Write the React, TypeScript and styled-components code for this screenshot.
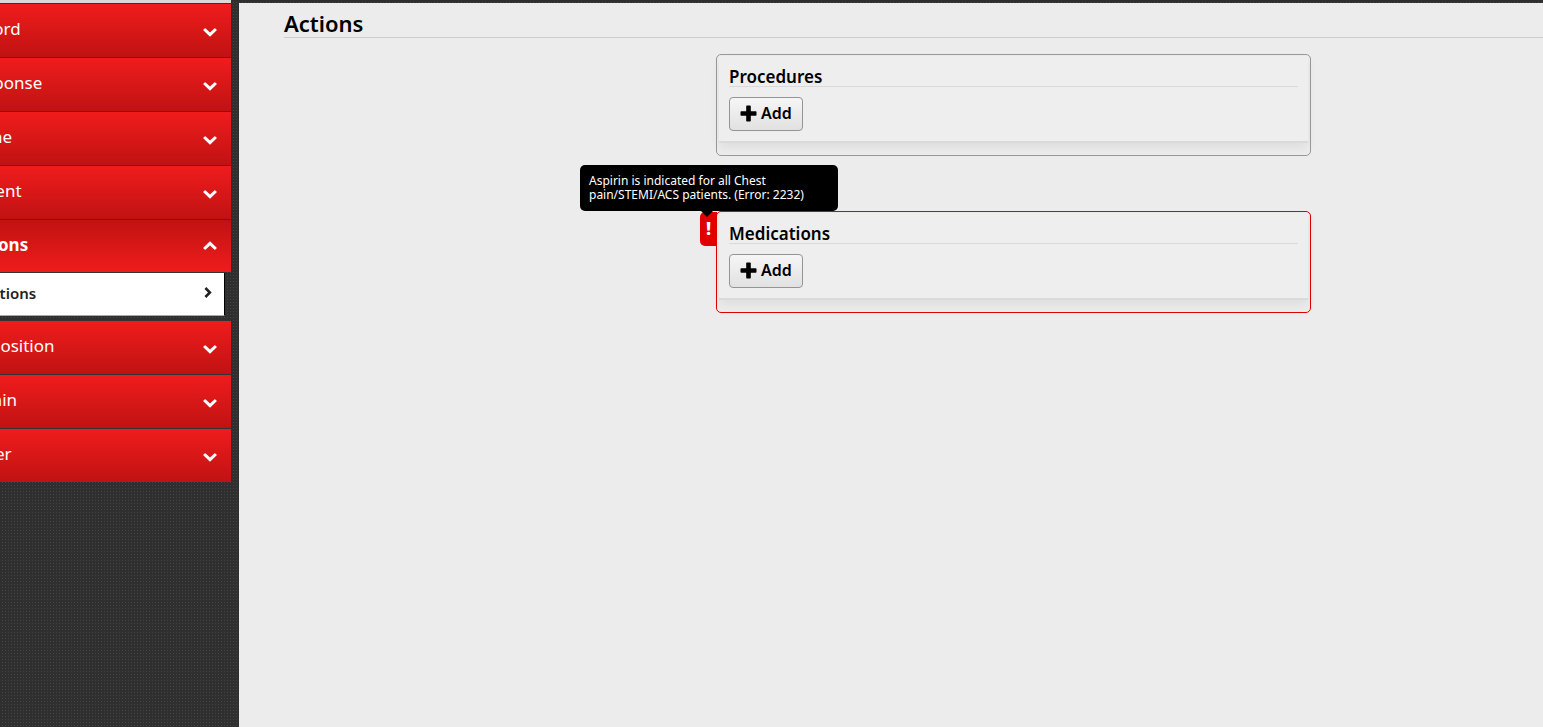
import React from "react";
import styled, { createGlobalStyle } from "styled-components";

const GlobalStyle = createGlobalStyle`
  *, *::before, *::after { box-sizing: border-box; }
  body {
    margin: 0;
    background-color: #2f2f2f;
    background-image:
      linear-gradient(90deg, #2f2f2f 2px, transparent 2px),
      linear-gradient(#2f2f2f 2px, #444 2px);
    background-size: 3px 3px;
    color: #000;
    font-family: "Noto Sans", "Open Sans", sans-serif;
  }
`;

const Page = styled.div`
  display: flex;
  min-height: 100vh;
  overflow: hidden;
`;

const Sidebar = styled.nav`
  flex: 0 0 279px;
  margin-left: -48px;
  border-top: 3px solid #d9d9d9;
`;

const SectionButton = styled.button<{ $open?: boolean }>`
  display: flex;
  align-items: center;
  justify-content: space-between;
  width: 100%;
  height: ${(p) => (p.$open ? 53 : 54)}px;
  padding: 0 14px 3px 13px;
  border: 0;
  border-top: 1px solid #333;
  background: ${(p) =>
    p.$open
      ? "linear-gradient(#c01212, #f01c1c)"
      : "linear-gradient(#f01c1c, #c01212)"};
  color: #fff;
  font: ${(p) => (p.$open ? 700 : 400)} 17px/24px "Noto Sans", sans-serif;
  text-align: left;

  svg {
    margin-top: ${(p) => (p.$open ? 2 : 6)}px;
  }
`;

const Submenu = styled.div`
  margin: 0 6px 4px 0;
  border-top: 1px solid #333;
`;

const SubmenuLink = styled.a`
  display: flex;
  align-items: center;
  justify-content: space-between;
  height: 43px;
  padding: 0 12px 3px 30px;
  border-right: 1px solid #000;
  border-bottom: 1px solid #aaa;
  background: #fff;
  color: #222;
  font-size: 15px;
  font-weight: 600;
  line-height: 20px;
  text-decoration: none;
`;

const Content = styled.main`
  flex: 1;
  min-width: 0;
  margin: 3px 0 0 8px;
  padding-left: 45px;
  background: #ececec;
`;

const Title = styled.h1`
  margin: 0 0 16px;
  padding-top: 6px;
  border-bottom: 1px solid #ccc;
  font-size: 22px;
  font-weight: 600;
  line-height: 28px;
`;

const Panels = styled.div`
  display: flex;
  flex-direction: column;
  gap: 55px;
  max-width: 795px;
  margin: 0 auto;
  padding-left: 200px;
`;

const Panel = styled.section<{ $invalid?: boolean }>`
  position: relative;
  padding: 1px 2px 12px;
  border: 1px solid ${(p) => (p.$invalid ? "#e00000" : "#999")};
  border-radius: 5px;
`;

const PanelBody = styled.div`
  padding: 11px 10px 10px;
  border-bottom: 2px solid #dadada;
  background: #eee;
  box-shadow: 0 5px 10px rgba(0, 0, 0, 0.06);
`;

const PanelTitle = styled.h2`
  margin: 0 0 10px;
  border-bottom: 1px solid #dadada;
  font-size: 17px;
  font-weight: 600;
  line-height: 19px;
`;

const AddButton = styled.button`
  display: flex;
  align-items: center;
  gap: 4px;
  height: 34px;
  padding: 0 10px 2px;
  border: 1px solid #949494;
  border-radius: 4px;
  background: linear-gradient(#f6f6f6, #e1e1e1);
  color: #000;
  font: 600 16px/20px "Noto Sans", sans-serif;
`;

const ErrorFlag = styled.span`
  position: absolute;
  top: 0;
  right: 100%;
  width: 17px;
  height: 34px;
  border-radius: 5px 0 0 5px;
  background: #e00000;
  color: #fff;
  font-size: 18px;
  font-weight: 800;
  line-height: 32px;
  text-align: center;
`;

const Tooltip = styled.div`
  position: absolute;
  bottom: 100%;
  left: -137px;
  width: 258px;
  margin-bottom: 1px;
  padding: 9px;
  border-radius: 5px;
  background: #000;
  color: #fff;
  font-size: 12px;
  line-height: 14px;

  &::after {
    content: "";
    position: absolute;
    top: 100%;
    left: 121px;
    border: 6px solid transparent;
    border-top-color: #000;
    border-bottom: 0;
  }
`;

const Icon = styled.svg`
  display: block;
  flex: none;
  fill: currentColor;
`;

const ChevronDown = () => (
  <Icon width="14" height="9" viewBox="0 0 14 9" aria-hidden="true">
    <path d="M7 8.8 .5 2.5Q.1 2 .5 1.6L1.7.4Q2.2 0 2.7.4L7 4.6 11.3.4Q11.8 0 12.3.4L13.5 1.6Q13.9 2 13.5 2.5Z" />
  </Icon>
);

const ChevronUp = () => (
  <Icon width="14" height="9" viewBox="0 0 14 9" aria-hidden="true">
    <path d="M7 .2 .5 6.5Q.1 7 .5 7.4L1.7 8.6Q2.2 9 2.7 8.6L7 4.4 11.3 8.6Q11.8 9 12.3 8.6L13.5 7.4Q13.9 7 13.5 6.5Z" />
  </Icon>
);

const ChevronRight = () => (
  <Icon width="8" height="11" viewBox="0 0 8 11" aria-hidden="true">
    <path d="M7.7 5.5 2.3 10.9 .5 9.1 4 5.5 .5 1.9 2.3 .1Z" />
  </Icon>
);

const Plus = () => (
  <Icon width="17" height="17" viewBox="0 0 17 17" aria-hidden="true">
    <path d="M7 .5H10Q10.8.5 10.8 1.3V6.2H15.7Q16.5 6.2 16.5 7V10Q16.5 10.8 15.7 10.8H10.8V15.7Q10.8 16.5 10 16.5H7Q6.2 16.5 6.2 15.7V10.8H1.3Q.5 10.8.5 10V7Q.5 6.2 1.3 6.2H6.2V1.3Q6.2.5 7 .5Z" />
  </Icon>
);

const sections = [
  "Record",
  "Response",
  "Scene",
  "Patient",
  "Actions",
  "Disposition",
  "Admin",
  "Other",
];

const panels = [
  { title: "Procedures", error: "" },
  {
    title: "Medications",
    error: "Aspirin is indicated for all Chest pain/STEMI/ACS patients. (Error: 2232)",
  },
];

export default function App() {
  return (
    <>
      <GlobalStyle />
      <Page>
        <Sidebar>
          {sections.map((name) => {
            const open = name === "Actions";
            return (
              <React.Fragment key={name}>
                <SectionButton type="button" $open={open} aria-expanded={open}>
                  {name}
                  {open ? <ChevronUp /> : <ChevronDown />}
                </SectionButton>
                {open && (
                  <Submenu>
                    <SubmenuLink href="#actions">
                      Actions
                      <ChevronRight />
                    </SubmenuLink>
                  </Submenu>
                )}
              </React.Fragment>
            );
          })}
        </Sidebar>
        <Content>
          <Title>Actions</Title>
          <Panels>
            {panels.map(({ title, error }) => (
              <Panel key={title} $invalid={!!error}>
                <PanelBody>
                  <PanelTitle>{title}</PanelTitle>
                  <AddButton type="button">
                    <Plus />
                    Add
                  </AddButton>
                </PanelBody>
                {error && (
                  <>
                    <ErrorFlag>!</ErrorFlag>
                    <Tooltip role="tooltip">{error}</Tooltip>
                  </>
                )}
              </Panel>
            ))}
          </Panels>
        </Content>
      </Page>
    </>
  );
}
